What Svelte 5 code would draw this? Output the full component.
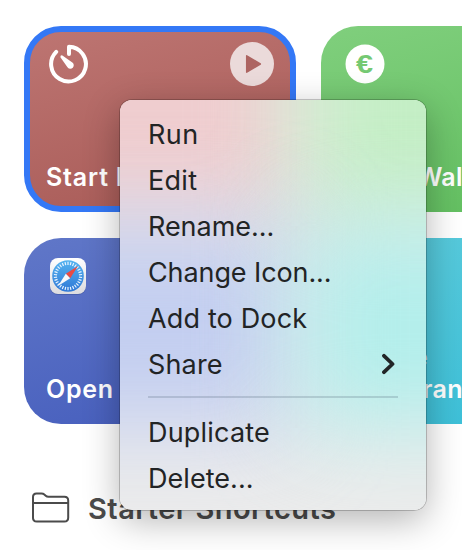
<script>
  const primary = [
    { label: 'Run', spacing: 0.4 },
    { label: 'Edit', spacing: 0.3 },
    { label: 'Rename...', spacing: -0.05 },
    { label: 'Change Icon...', spacing: -0.1 },
    { label: 'Add to Dock', spacing: 0.15 },
    { label: 'Share', spacing: 0.15 , submenu: true }
  ];
  const secondary = [
    { label: 'Duplicate', spacing: 0.2 },
    { label: 'Delete...', spacing: 0.05 }
  ];
  const ticks = Array.from({ length: 30 }, (_, i) => i * 12);
</script>

{#snippet row(item)}
  <li>
    <span style="letter-spacing: {item.spacing}px">{item.label}</span>
    {#if item.submenu}
      <svg width="14" height="22" viewBox="0 0 14 22"><path d="M2 2.8 10.5 11 2 19.2" fill="none" stroke="#222627" stroke-width="3.8" stroke-linecap="round" stroke-linejoin="round" /></svg>
    {/if}
  </li>
{/snippet}

<main>
  <div class="grid">
    <section class="card red">
      <div class="top">
        <svg class="timer" width="40" height="40" viewBox="0 0 40 40">
          <path d="M7.2 7.8A17.4 17.4 0 1 0 20 2.7V10" fill="none" stroke="#fff" stroke-width="4" stroke-linecap="round" stroke-linejoin="round" />
          <path d="M13.4 11.4 23 18.2A3.5 3.5 0 1 1 18.3 23.1L11.4 13.2Q11.2 10.9 13.4 11.4Z" fill="#fff" />
        </svg>
        <svg class="play" width="44" height="44" viewBox="0 0 44 44">
          <circle cx="22" cy="22" r="22" fill="#ebdada" />
          <path d="M16.7 13.8 30.3 22 16.7 30.2Z" fill="#ad6461" stroke="#ad6461" stroke-width="1.5" stroke-linejoin="round" />
        </svg>
      </div>
      <h2 class="start">Start P</h2>
    </section>

    <section class="card green">
      <svg class="euro" width="40" height="40" viewBox="0 0 40 40">
        <circle cx="20" cy="20" r="19.5" fill="#fff" />
        <text x="11" y="28.8" textLength="17" lengthAdjust="spacingAndGlyphs" font-family="Liberation Sans, sans-serif" font-size="25" font-weight="700" fill="#75c973">€</text>
      </svg>
      <h2 class="wallet">Wallet</h2>
    </section>

    <section class="card blue">
      <svg class="safari" width="38" height="38" viewBox="0 0 38 38">
        <defs>
          <linearGradient id="sky" x2="0" y2="1"><stop stop-color="#55b4f0" /><stop offset="1" stop-color="#2f78d6" /></linearGradient>
          <linearGradient id="tile" x2="0" y2="1"><stop stop-color="#fff" /><stop offset="1" stop-color="#dcdcdf" /></linearGradient>
        </defs>
        <rect x="1" y="1.8" width="36" height="36" rx="8" fill="#253b80" opacity=".4" />
        <rect x="1" y="1" width="36" height="36" rx="8" fill="url(#tile)" />
        <circle cx="19" cy="19" r="15.8" fill="url(#sky)" />
        {#each ticks as angle}
          <path d="M19 4.8V8" stroke="#e8f4ff" stroke-width="1.2" transform="rotate({angle} 19 19)" />
        {/each}
        <path d="M29 9 21.2 21.2 16.8 16.8Z" fill="#e94b43" />
        <path d="M9 29 16.8 16.8 21.2 21.2Z" fill="#f7f8fa" />
      </svg>
      <h2 class="open">Open</h2>
    </section>

    <section class="card cyan">
      <h2 class="home">Home</h2>
      <h2 class="transfer">Transfer</h2>
    </section>
  </div>

  <footer>
    <svg width="38" height="32" viewBox="0 0 38 32" fill="none" stroke="#4b4b4b" stroke-width="2">
      <path d="M1 26.5V5Q1 1.5 4.5 1.5H9.5Q11.2 1.5 12.3 2.5L13.7 3.8Q14.8 4.8 16.5 4.8H32.4Q36.2 4.8 36.2 8.6V25.7Q36.2 29.5 32.4 29.5H4.8Q1 29.5 1 25.7ZM1 11H36.2" />
    </svg>
    <span>Starter Shortcuts</span>
  </footer>

  <nav class="menu">
    <div class="tint">
      <i class="t-red"></i><i class="t-green"></i><i class="t-blue"></i><i class="t-cyan"></i>
    </div>
    <ul>
      {#each primary as item}{@render row(item)}{/each}
    </ul>
    <hr />
    <ul>
      {#each secondary as item}{@render row(item)}{/each}
    </ul>
  </nav>
</main>

<style>
  main {
    position: relative;
    width: 462px;
    height: 550px;
    overflow: hidden;
    box-sizing: border-box;
    padding: 26px 0 0 24px;
    background: #fff;
    font-family: Inter, 'Liberation Sans', sans-serif;
  }
  .grid {
    display: grid;
    grid-template-columns: 272px 272px;
    grid-template-rows: 186px 186px;
    column-gap: 25px;
    row-gap: 26px;
  }
  .card {
    display: flex;
    flex-direction: column;
    justify-content: space-between;
    box-sizing: border-box;
    padding: 18px 22px 19px;
    border-radius: 37px;
    color: #fff;
  }
  .red {
    border: 6px solid #3478f6;
    padding: 10px 16px 13px;
    background: linear-gradient(165deg, #bd7572, #a75955);
  }
  .green { background: linear-gradient(165deg, #80cf7d, #60be5e); }
  .blue { background: linear-gradient(165deg, #6077c8, #445cbc); }
  .cyan { background: linear-gradient(165deg, #5acbdc, #3abfd8); justify-content: flex-end; }
  .top { display: flex; justify-content: space-between; align-items: flex-start; }
  .timer { margin: 2px 0 0 2.5px; }
  .euro { margin-left: 2px; }
  .safari { margin: 1px 0 0 3px; }
  h2 {
    margin: 0;
    font-size: 25px;
    line-height: 32px;
    font-weight: 600;
    letter-spacing: 0.2px;
    white-space: nowrap;
  }
  .start { letter-spacing: 0.8px; }
  .open { letter-spacing: 0.7px; }
  .wallet { padding-left: 74px; }
  .home { width: 85px; text-align: right; }
  .transfer { padding-left: 64px; letter-spacing: 0.4px; }
  footer {
    display: flex;
    align-items: center;
    gap: 18px;
    padding: 66px 0 0 8px;
    color: #4b4b4b;
    font-size: 29px;
    line-height: 38px;
    font-weight: 600;
    letter-spacing: 0.45px;
    white-space: nowrap;
  }
  footer svg { margin-bottom: 2px; }
  .menu {
    position: absolute;
    left: 120px;
    top: 100px;
    width: 306px;
    height: 410px;
    box-sizing: border-box;
    padding: 12px 28px 8px;
    border-radius: 12px;
    box-shadow: 0 0 0 1px rgba(0, 0, 0, 0.2), 0 10px 36px rgba(0, 0, 0, 0.3);
  }
  .tint {
    position: absolute;
    inset: 0;
    overflow: hidden;
    border-radius: 12px;
    background: #ececec;
  }
  .tint i { position: absolute; filter: blur(46px); }
  .t-red { left: -160px; top: -160px; width: 332px; height: 280px; background: #efcdcf; }
  .t-green { left: 186px; top: -160px; width: 280px; height: 280px; background: #c4eec5; }
  .t-blue { left: -160px; top: 126px; width: 332px; height: 202px; background: #c3cef0; }
  .t-cyan { left: 180px; top: 126px; width: 286px; height: 202px; background: #b3eeeb; }
  ul { position: relative; margin: 0; padding: 0; list-style: none; }
  li {
    display: flex;
    align-items: center;
    justify-content: space-between;
    height: 46px;
    color: #222425;
    font-size: 27px;
    line-height: 46px;
    white-space: nowrap;
  }
  li svg { margin: 0 2px 2px 0; }
  hr {
    position: relative;
    height: 2px;
    margin: 8px 0 12px;
    border: 0;
    background: rgba(60, 80, 100, 0.2);
  }
</style>
